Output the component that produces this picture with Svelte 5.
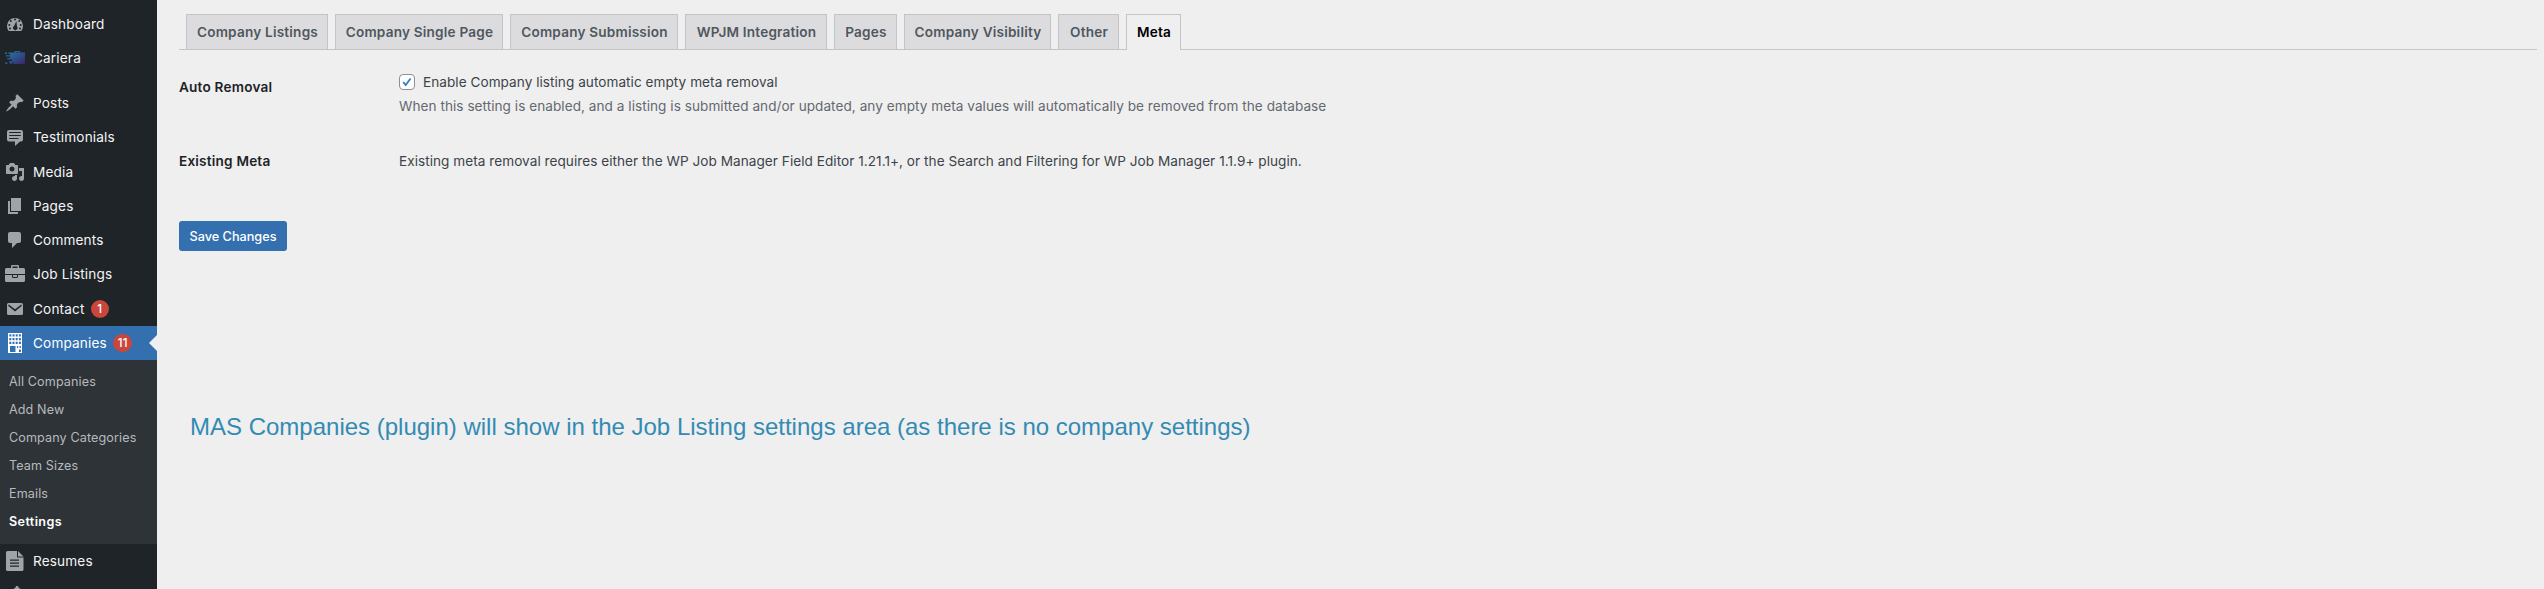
<script>
  const top = ['Dashboard', 'Cariera'];
  const main = [
    { label: 'Posts' }, { label: 'Testimonials' }, { label: 'Media' }, { label: 'Pages' },
    { label: 'Comments' }, { label: 'Job Listings' }, { label: 'Contact', count: 1 }
  ];
  const submenu = ['All Companies', 'Add New', 'Company Categories', 'Team Sizes', 'Emails', 'Settings'];
  const tabs = [
    { label: 'Company Listings', width: 142 },
    { label: 'Company Single Page', width: 168 },
    { label: 'Company Submission', width: 168 },
    { label: 'WPJM Integration', width: 142 },
    { label: 'Pages', width: 63 },
    { label: 'Company Visibility', width: 147 },
    { label: 'Other', width: 61 },
    { label: 'Meta', width: 55, active: true }
  ];
</script>

{#snippet icon(name)}
  <svg class="icon" viewBox="0 0 20 20" aria-hidden="true">
    {#if name === 'Dashboard'}
      <path fill-rule="evenodd" d="M3.8 17h12.4A8 8 0 1 0 3.8 17zM10 4.4a1 1 0 1 1 0 2 1 1 0 0 1 0-2zM5.8 6a1 1 0 1 1 0 2 1 1 0 0 1 0-2zm8.400 0a1 1 0 1 1 0 2 1 1 0 0 1 0-2zM4.300 10a1 1 0 1 1 0 2 1 1 0 0 1 0-2zm11.400 0a1 1 0 1 1 0 2 1 1 0 0 1 0-2zM11.400 6.900 12 12.600a2.200 2.200 0 1 1-2.900-.6zM5 13.400a1 1 0 1 1 0 2 1 1 0 0 1 0-2zm10 0a1 1 0 1 1 0 2 1 1 0 0 1 0-2z" />
    {:else if name === 'Cariera'}
      <defs><linearGradient id="brand" x1="0" y1="0" x2="1" y2="1"><stop offset="0" stop-color="#2a7a9c" /><stop offset=".5" stop-color="#2e5490" /><stop offset="1" stop-color="#3a2562" /></linearGradient></defs>
      <path fill="url(#brand)" fill-rule="evenodd" d="M5 4.500h4.500V3H15v1.500h5V16H8.500v-1.500H4V13h3v-1.600H2.300V10H5V8.600H1V7.200h4zM11 4.500h2.800V4H11zM0 4.500h2v1.400H0zm3.500 0H5v1.400H3.500zM0 14.500h2.500V16H0zm5 0h2V16H5z" />
    {:else if name === 'Posts'}
      <path d="M10.440 3.020l1.820-1.820 6.360 6.350-1.830 1.820c-1.050-.68-2.480-.57-3.410.36l-.75.750c-.92.930-1.040 2.350-.35 3.410l-1.830 1.820-2.410-2.410-2.800 2.790c-.42.420-3.380 2.710-3.800 2.290s1.860-3.390 2.280-3.810l2.790-2.790L4.100 9.360l1.830-1.820c1.050.69 2.480.570 3.400-.36l.75-.75c.93-.92 1.050-2.350.36-3.410z" />
    {:else if name === 'Testimonials'}
      <path fill-rule="evenodd" d="M4 3h12a2 2 0 0 1 2 2v7.500a2 2 0 0 1-2 2h-1L10 19v-4.500H4a2 2 0 0 1-2-2V5a2 2 0 0 1 2-2zm.2 2v1.100h11.600V5zm0 3v1.100h11.600V8zm0 3v1.100h9.300V11z" />
    {:else if name === 'Media'}
      <path fill-rule="evenodd" d="M13 11V4c0-.550-.450-1-1-1h-1.670L9 1H5L3.670 3H2c-.550 0-1 .450-1 1v7c0 .550.450 1 1 1h10c.550 0 1-.45 1-1zM7 4.500c1.380 0 2.500 1.120 2.500 2.500S8.380 9.500 7 9.500 4.500 8.380 4.500 7 5.620 4.500 7 4.500zM14 6h5v10.500c0 1.380-1.120 2.500-2.500 2.500S14 17.880 14 16.500s1.120-2.500 2.500-2.500c.170 0 .340.020.5.050V9h-3zm-4 8.050V13h2v3.500c0 1.380-1.120 2.500-2.500 2.500S7 17.880 7 16.500 8.120 14 9.500 14z" />
    {:else if name === 'Pages'}
      <path d="M6 15V2h10v13zM5 16h8v2H3V5h2z" />
    {:else if name === 'Comments'}
      <path d="M5 2h9a2 2 0 0 1 2 2v7a2 2 0 0 1-2 2h-2l-5 5v-5H5a2 2 0 0 1-2-2V4a2 2 0 0 1 2-2z" />
    {:else if name === 'Job Listings'}
      <path fill-rule="evenodd" d="M6 4V2.200Q6 1 7.200 1h5.600Q14 1 14 2.200V4h4.500Q20 4 20 5.500V10H0V5.500Q0 4 1.500 4zm1.500 0h5V2.500h-5zM0 11h7v1.500Q7 14 8.500 14h3q1.500 0 1.500-1.500V11h7v5.500q0 1.500-1.500 1.500h-17Q0 18 0 16.500zM8 11h4v1.500q0 .500-.5.500h-3q-.5 0-.5-.5z" />
    {:else if name === 'Contact'}
      <path fill-rule="evenodd" d="M3.500 4h13q1.500 0 1.500 1.500v9q0 1.500-1.500 1.500h-13Q2 16 2 14.500v-9Q2 4 3.500 4zM3.700 5.600 3.100 6.700 10 12.600l6.900-5.900-.6-1.100L10 10.300z" />
    {:else if name === 'Companies'}
      <path fill-rule="evenodd" d="M3 0h14v20H3zM4.300 1.300v2.200h2V1.300zm3.200 0v2.200h2V1.300zm3.200 0v2.200h2V1.300zm3.200 0v2.200h2V1.300zM4.300 5v2.200h2V5zm3.200 0v2.200h2V5zm3.200 0v2.200h2V5zm3.200 0v2.200h2V5zM4.300 8.700v2.200h2V8.700zm3.200 0v2.200h2V8.700zm3.200 0v2.200h2V8.700zm3.200 0v2.200h2V8.700zM5 13v6h5.500v-6zm7 0v2h1.200v-2zm2.500 0v2h1.400v-2zm-.6 3.500V19h2v-2.500z" />
    {:else if name === 'Resumes'}
      <path fill-rule="evenodd" d="M2.500 0H12v6.500h6.500v12q0 1.500-1.500 1.500H2.500Q1 20 1 18.500v-17Q1 0 2.500 0zM13 0l5.500 5.500H13zM5 8.500v1.300h9V8.500zm0 3v1.300h9v-1.300zm0 3v1.300h9v-1.300z" />
    {:else}
      <path d="M12 0c1 0 1.500.500 1.700 2L16 3h2v15H2V3h6l2.300-1C10.500.500 11 0 12 0z" />
    {/if}
  </svg>
{/snippet}

<div class="page">
  <nav>
    {#each top as label}
      <a class="item">{@render icon(label)}<span>{label}</span></a>
    {/each}
    <div class="separator"></div>
    {#each main as entry}
      <a class="item">{@render icon(entry.label)}<span>{entry.label}</span>{#if entry.count}<b class="count">{entry.count}</b>{/if}</a>
    {/each}
    <a class="item current">{@render icon('Companies')}<span>Companies</span><b class="count">11</b></a>
    <div class="submenu">
      {#each submenu as label}
        <a class:selected={label === 'Settings'}>{label}</a>
      {/each}
    </div>
    <a class="item">{@render icon('Resumes')}<span>Resumes</span></a>
    <a class="item next">{@render icon('More')}</a>
  </nav>

  <main>
    <div class="tabs">
      {#each tabs as tab}
        <a class="tab" class:active={tab.active} style:width="{tab.width}px">{tab.label}</a>
      {/each}
    </div>
    <div class="row first">
      <h2>Auto Removal</h2>
      <div>
        <label>
          <i class="box"><svg viewBox="0 0 16 16"><path d="M3.700 8.200l2.800 3.300 5.600-7.500" /></svg></i>
          Enable Company listing automatic empty meta removal
        </label>
        <p class="hint">When this setting is enabled, and a listing is submitted and/or updated, any empty meta values will automatically be removed from the database</p>
      </div>
    </div>
    <div class="row">
      <h2>Existing Meta</h2>
      <p>Existing meta removal requires either the WP Job Manager Field Editor 1.21.1+, or the Search and Filtering for WP Job Manager 1.1.9+ plugin.</p>
    </div>
    <button>Save Changes</button>
    <p class="note">MAS Companies (plugin) will show in the Job Listing settings area (as there is no company settings)</p>
  </main>
</div>

<style>
  :global(body) { background: #efefef; overflow: hidden; }
  .page { display: flex; height: 589px; overflow: hidden; font: 13.6px/20px Inter, sans-serif; color: #3c434a; letter-spacing: 0.04px; }
  nav { width: 157px; flex: none; box-sizing: border-box; padding-top: 7px; background: #1f2428; color: #f4f4f5; font-weight: 400; letter-spacing: 0.15px; }
  .item { display: flex; align-items: center; height: 34.3px; padding-left: 5px; position: relative; }
  .icon { width: 20px; height: 20px; flex: none; fill: #a0a4a9; margin-right: 8px; }
  .separator { height: 10.200px; }
  .count { min-width: 8px; height: 18px; padding: 0 5px; margin: 1px 0 0 6px; border-radius: 9px; background: #c9463d; color: #fff; font-size: 11.5px; line-height: 18px; font-weight: 500; text-align: center; letter-spacing: 0; }
  .current { height: 34px; background: #3470b0; color: #fff; }
  .current .icon { fill: #fff; }
  .current::after { content: ''; position: absolute; right: 0; top: 9px; border: 8px solid transparent; border-left: 0; border-right-color: #efefef; }
  .submenu { height: 184px; box-sizing: border-box; padding: 8px 0 0 9px; background: #2e3337; color: #b7babd; font-size: 12.6px; font-weight: 400; letter-spacing: 0.11px; }
  .submenu a { display: flex; align-items: center; height: 28.100px; }
  .submenu .selected { color: #fff; font-weight: 600; letter-spacing: 0.38px; }
  .next { height: 36px; }
  main { flex: 1; min-width: 0; padding: 14px 7px 0 22px; }
  .tabs { display: flex; gap: 7px; height: 35px; padding-left: 7px; border-bottom: 1px solid #c3c4c7; }
  .tab { box-sizing: border-box; height: 35px; padding-left: 1px; border: 1px solid #c3c4c7; border-bottom: 0; background: #dcdcde; color: #50575e; font-weight: 600; line-height: 35px; text-align: center; white-space: nowrap; letter-spacing: 0.2px; }
  .active { height: 36px; background: #efefef; color: #000; }
  .row { display: flex; height: 74px; box-sizing: border-box; padding-top: 1px; }
  .first { height: 75px; margin-top: 21px; }
  .first h2 { margin-top: 5px; }
  h2 { width: 220px; flex: none; margin: 4px 0 0; font-size: 13.6px; line-height: 20px; font-weight: 600; color: #1d2327; letter-spacing: 0.2px; }
  p { margin: 4px 0 0; white-space: nowrap; }
  label { display: flex; align-items: center; height: 20px; }
  .box { width: 14px; height: 14px; border: 1px solid #8c8f94; border-radius: 4px; background: #fff; margin-right: 8px; }
  .box svg { display: block; width: 14px; height: 14px; fill: none; stroke: #3582c4; stroke-width: 2.200; }
  .hint { color: #646970; }
  button { display: block; width: 108px; height: 30px; margin-top: 1px; padding: 1px 0 0; border: 0; border-radius: 3px; background: #3470b0; color: #fff; font: 500 12.7px/29px Inter, sans-serif; }
  .note { margin: 162px 0 0 11px; font: 24px/28px "Liberation Sans", Arial, sans-serif; color: #338bb3; letter-spacing: 0; }
</style>
